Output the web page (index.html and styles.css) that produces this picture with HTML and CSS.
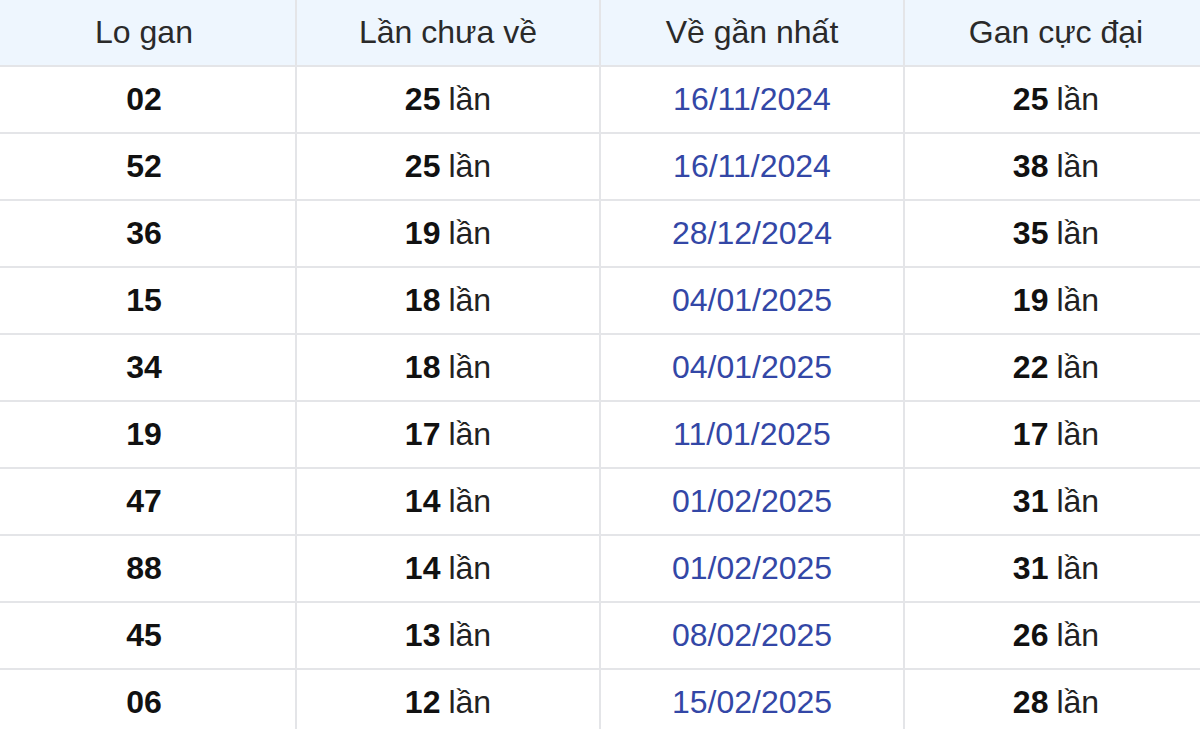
FILE: index.html
```html
<!DOCTYPE html>
<html lang="vi">
<head>
<meta charset="utf-8">
<title>Lo gan</title>
<link rel="stylesheet" href="styles.css">
</head>
<body>
<div class="frame">
  <div class="grid">
    <div class="cell head">Lo gan</div>
    <div class="cell head">Lần chưa về</div>
    <div class="cell head">Về gần nhất</div>
    <div class="cell head">Gan cực đại</div>

    <div class="cell num">02</div><div class="cell"><b>25</b> lần</div><div class="cell date">16/11/2024</div><div class="cell"><b>25</b> lần</div>
    <div class="cell num">52</div><div class="cell"><b>25</b> lần</div><div class="cell date">16/11/2024</div><div class="cell"><b>38</b> lần</div>
    <div class="cell num">36</div><div class="cell"><b>19</b> lần</div><div class="cell date">28/12/2024</div><div class="cell"><b>35</b> lần</div>
    <div class="cell num">15</div><div class="cell"><b>18</b> lần</div><div class="cell date">04/01/2025</div><div class="cell"><b>19</b> lần</div>
    <div class="cell num">34</div><div class="cell"><b>18</b> lần</div><div class="cell date">04/01/2025</div><div class="cell"><b>22</b> lần</div>
    <div class="cell num">19</div><div class="cell"><b>17</b> lần</div><div class="cell date">11/01/2025</div><div class="cell"><b>17</b> lần</div>
    <div class="cell num">47</div><div class="cell"><b>14</b> lần</div><div class="cell date">01/02/2025</div><div class="cell"><b>31</b> lần</div>
    <div class="cell num">88</div><div class="cell"><b>14</b> lần</div><div class="cell date">01/02/2025</div><div class="cell"><b>31</b> lần</div>
    <div class="cell num">45</div><div class="cell"><b>13</b> lần</div><div class="cell date">08/02/2025</div><div class="cell"><b>26</b> lần</div>
    <div class="cell num">06</div><div class="cell"><b>12</b> lần</div><div class="cell date">15/02/2025</div><div class="cell"><b>28</b> lần</div>
  </div>
</div>
</body>
</html>
```

FILE: styles.css
```css
html, body {
  margin: 0;
  padding: 0;
  background: #ffffff;
}
body {
  width: 1200px;
  height: 736px;
  overflow: hidden;
  font-family: "Liberation Sans", Arial, sans-serif;
}
.frame {
  height: 729px;
  overflow: hidden;
}
.grid {
  display: grid;
  grid-template-columns: repeat(4, 302px);
  grid-auto-rows: 65px;
  gap: 2px;
  background: #e4e5e8;
  margin-left: -7px;
  width: 1214px;
}
.cell {
  background: #ffffff;
  display: flex;
  align-items: center;
  justify-content: center;
  font-size: 32px;
  color: #222222;
  white-space: nowrap;
}
.cell b {
  font-weight: bold;
  color: #111111;
  margin-right: 8px;
}
.head {
  background: #eef6fe;
  color: #2a2a2a;
}
.num {
  font-weight: bold;
  color: #111111;
}
.date {
  color: #3347a6;
}
```
